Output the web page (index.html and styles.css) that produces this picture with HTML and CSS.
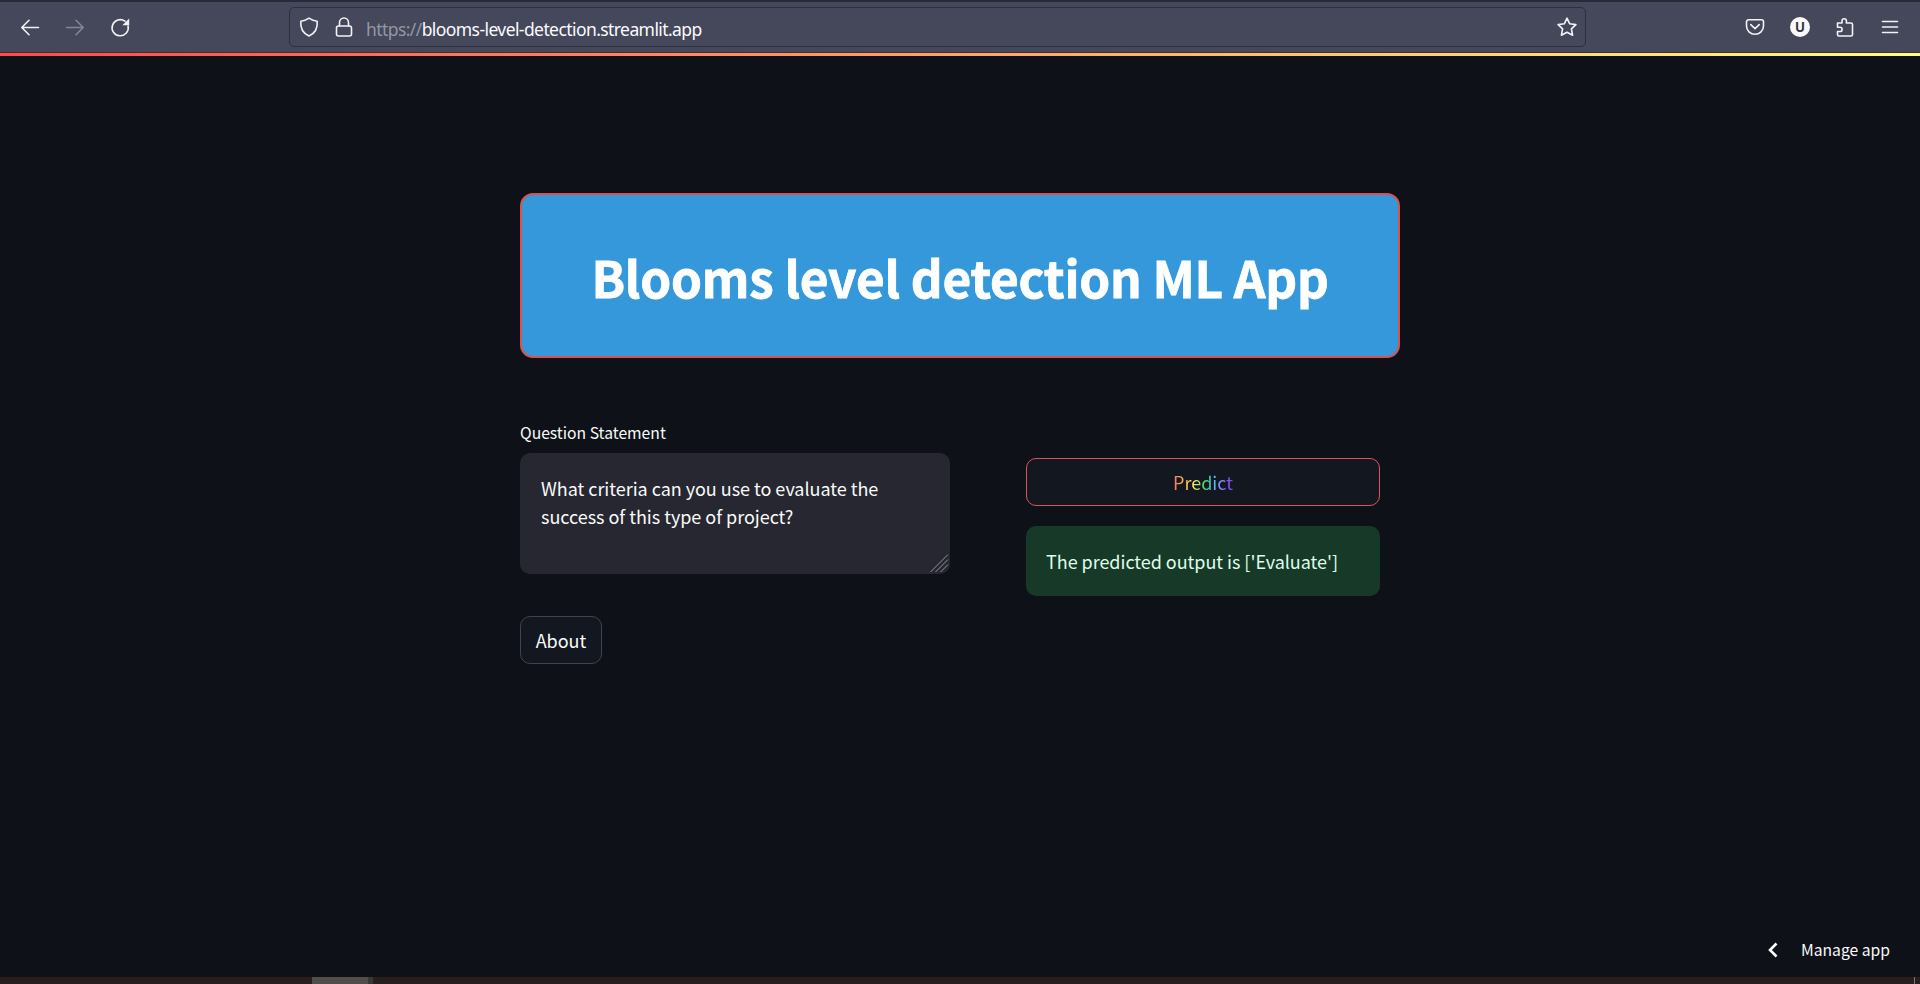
FILE: index.html
```html
<!DOCTYPE html>
<html lang="en">
<head>
<meta charset="utf-8">
<title>Blooms level detection</title>
<link rel="stylesheet" href="styles.css">
</head>
<body>
<header class="toolbar">
  <nav class="nav">
    <svg class="icon" viewBox="0 0 20 20"><path d="M18.5 10.500H2M9 3.300 1.800 10.500 9 17.700"/></svg>
    <svg class="icon dim" viewBox="0 0 20 20"><path d="M1.500 10.500H18M11 3.300 18.200 10.500 11 17.700"/></svg>
    <svg class="icon" viewBox="0 0 20 20"><path d="M18.100 9A8.100 8.100 0 1 1 15 4.200"/><path class="solid" d="M19.200 1.500v6.800h-6.800z"/></svg>
  </nav>
  <div class="urlbar">
    <svg class="icon" viewBox="0 0 20 20"><path d="M10 1.200C12.500 3 15 3.900 18.200 4.200 18.800 11 16 16.200 10 19 4 16.200 1.200 11 1.800 4.200 5 3.900 7.500 3 10 1.200z"/></svg>
    <svg class="icon lock" viewBox="0 0 20 20"><path d="M5.500 9V5.500a4.500 4.500 0 0 1 9 0V9"/><rect x="2.500" y="9" width="15" height="10" rx="2"/></svg>
    <span class="url"><span class="scheme">https://</span>blooms-level-detection.streamlit.app</span>
    <svg class="icon star" viewBox="0 0 20 20"><path d="M10 1.200 12.700 6.800 18.900 7.600 14.400 11.900 15.600 18.200 10 15.200 4.400 18.200 5.600 11.900 1.100 7.600 7.300 6.800z"/></svg>
  </div>
  <div class="actions">
    <svg class="icon" viewBox="0 0 20 20"><path d="M3.500 2.800h13a2 2 0 0 1 2 2V9a8.500 8.300 0 0 1-17 0V4.800a2 2 0 0 1 2-2zM5.800 7.600 10 11.600l4.200-4"/></svg>
    <span class="avatar">U</span>
    <svg class="icon" viewBox="0 0 20 20"><path d="M2.500 6H7V4a2.200 2.200 0 0 1 4.400 0v2H16a1.500 1.500 0 0 1 1.500 1.500V17.500A1.500 1.500 0 0 1 16 19H4a1.500 1.500 0 0 1-1.500-1.500V14.500H5a2.100 2.100 0 0 0 0-4.200H2.500z"/></svg>
    <svg class="icon" viewBox="0 0 20 20"><path d="M2.500 4.500h15M2.500 10h15M2.500 15.500h15"/></svg>
  </div>
</header>
<div class="decoration"></div>
<main class="content">
  <div class="banner"><h1>Blooms level detection ML App</h1></div>
  <div class="columns">
    <section class="question">
      <label class="label" for="question">Question Statement</label>
      <div class="field">
        <textarea id="question" class="textarea">What criteria can you use to evaluate the success of this type of project?</textarea>
        <svg class="grip" viewBox="0 0 20 20"><path d="M1.500 19 19 1.500M6.500 19 19 6.500M11.500 19 19 11.500"/></svg>
      </div>
      <button class="button about">About</button>
    </section>
    <section class="result">
      <button class="button predict"><span class="rainbow">Predict</span></button>
      <div class="success">The predicted output is ['Evaluate']</div>
    </section>
  </div>
</main>
<footer class="manage">
  <svg class="chevron" viewBox="0 0 10 16"><path d="M8.500 1.500 2 8l6.500 6.500"/></svg>
  <span>Manage app</span>
</footer>
<div class="strip"><span class="thumb"></span><span class="tick"></span></div>
</body>
</html>
```
FILE: styles.css
```css
* { box-sizing: border-box; }
body {
  margin: 0;
  height: 984px;
  overflow: hidden;
  display: flex;
  flex-direction: column;
  background: #0e1117;
  color: #fafafa;
  font-family: "Noto Sans CJK JP", "Noto Sans", sans-serif;
  font-size: 18px;
}
.toolbar {
  flex: none;
  height: 53px;
  display: flex;
  align-items: center;
  background: #45475a;
  border-top: 2px solid #292a38;
  border-bottom: 1px solid #412d39;
}
.icon {
  flex: none;
  width: 20px;
  height: 20px;
  fill: none;
  stroke: #f2f2f7;
  stroke-width: 1.6;
  stroke-linecap: round;
  stroke-linejoin: round;
}
.icon .solid { fill: #f2f2f7; stroke: none; }
.icon.dim { stroke: #858695; }
.nav { display: flex; gap: 25px; padding-left: 20px; width: 289px; }
.urlbar {
  width: 1297px;
  height: 40px;
  display: flex;
  align-items: center;
  padding: 0 8px 0 9px;
  border: 1px solid #2d2e3f;
  border-radius: 5px;
}
.lock { margin-left: 15px; }
.url {
  margin: 3px 0 0 12px;
  font: 17.5px/24px "Noto Sans", sans-serif;
  letter-spacing: -0.58px;
  color: #fbfbfe;
}
.scheme { color: #9596a5; }
.star { margin-left: auto; }
.actions { display: flex; align-items: center; gap: 25px; margin-left: 159px; }
.avatar {
  width: 20px;
  height: 20px;
  border-radius: 50%;
  background: #f9f9fa;
  color: #33343f;
  font: bold 13px/20px Inter, sans-serif;
  text-align: center;
}
.decoration {
  flex: none;
  height: 3px;
  background: linear-gradient(90deg, #ff4b4b, #fffd80);
}
.content { width: 880px; margin: 137px auto 0; }
.banner {
  height: 165px;
  display: flex;
  align-items: center;
  justify-content: center;
  background: #3498db;
  border: 2px solid #d6534f;
  border-radius: 13px;
}
h1 {
  margin: 3px 0 0;
  font-size: 49.5px;
  line-height: 66px;
  font-weight: 700;
  letter-spacing: -0.24px;
  color: #fff;
  white-space: nowrap;
  -webkit-text-stroke: 0.8px #fff;
}
.columns { display: flex; gap: 76px; margin-top: 62px; }
.question { width: 430px; }
.label { display: block; font-size: 15.7px; line-height: 26px; }
.field { position: relative; height: 121px; margin-top: 7px; }
.textarea {
  display: block;
  width: 100%;
  height: 100%;
  padding: 21px 19px 21px 21px;
  border: 0;
  border-radius: 10px;
  resize: none;
  outline: 0;
  background: #262730;
  color: #fafafa;
  font: inherit;
  line-height: 28px;
  letter-spacing: -0.03px;
}
.grip {
  position: absolute;
  right: 1px;
  bottom: 1px;
  width: 20px;
  height: 20px;
  fill: none;
  stroke: #94949a;
  stroke-width: 1;
}
.button {
  display: block;
  height: 48px;
  padding: 0;
  background: #131720;
  border: 1px solid #41444c;
  border-radius: 10px;
  color: #fafafa;
  font: inherit;
}
.about { width: 82px; margin-top: 42px; }
.result { width: 354px; padding-top: 38px; }
.predict { width: 100%; border-color: #e0525a; }
.rainbow {
  background: linear-gradient(90deg, #ff6c6c, #ffbd45 20%, #fff06a 34%, #3dd56d 54%, #60b4ff 70%, #8f6cf0 86%, #803df5);
  -webkit-background-clip: text;
  background-clip: text;
  color: transparent;
}
.success {
  height: 70px;
  margin-top: 20px;
  padding: 21px 20px;
  border-radius: 10px;
  background: #173928;
  color: #dffde9;
  line-height: 28px;
  letter-spacing: -0.04px;
}
.manage {
  display: flex;
  align-items: center;
  gap: 23px;
  margin: auto 30px 14px auto;
  font-size: 15.7px;
  line-height: 26px;
}
.chevron { width: 10px; height: 16px; fill: none; stroke: #fff; stroke-width: 2.6; }
.strip {
  flex: none;
  height: 7px;
  display: flex;
  background: #291d20;
}
.thumb { width: 61px; margin-left: 312px; background: #514d4b; border-right: 5px solid #3b3736; }
.tick { width: 1px; margin-left: auto; margin-right: 5px; background: #777; }
```
